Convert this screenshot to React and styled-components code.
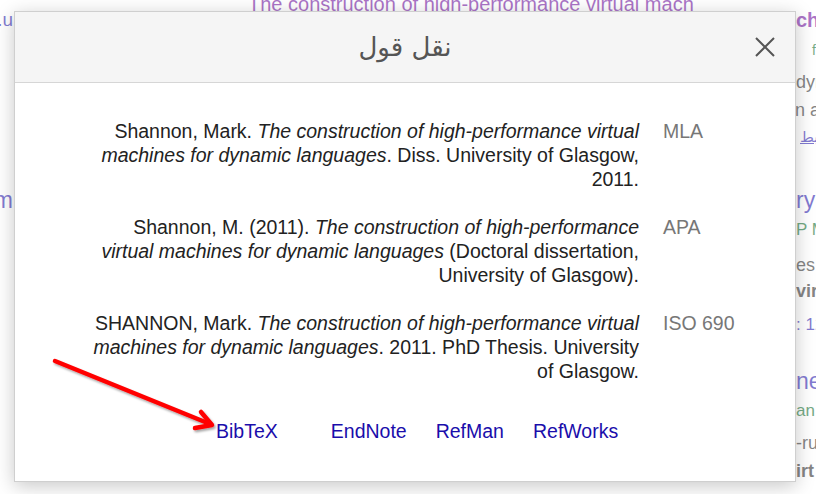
import styled, { createGlobalStyle } from "styled-components";

const GlobalStyle = createGlobalStyle`
  html, body {
    margin: 0;
    padding: 0;
    background: #fff;
  }
  body {
    font-family: "Liberation Sans", Arial, "DejaVu Sans", sans-serif;
    overflow: hidden;
  }
`;

const tones = {
  visited: "#660099",
  link: "#1a0dab",
  green: "#006621",
  text: "#222",
};

// page behind the modal, only the edges show
const bgLines = [
  { y: 4, x: 248, size: 20, tone: "visited", text: "The construction of high-performance virtual mach" },
  { y: 20, x: 796, size: 20, tone: "visited", bold: true, text: "chines for dynamic languages" },
  { y: 50, x: 812, size: 14, tone: "green", text: "ft" },
  { y: 82, x: 796, size: 18, tone: "text", text: "dynamic languages" },
  { y: 110, x: 791, size: 18, tone: "text", text: "in a" },
  { y: 137, x: 800, size: 15, tone: "link", underline: true, text: "مرتبط" },
  { y: 200, x: 796, size: 23, tone: "link", text: "ry" },
  { y: 230, x: 796, size: 17, tone: "green", text: "P M" },
  { y: 265, x: 796, size: 18, tone: "text", text: "es" },
  { y: 291, x: 796, size: 18, tone: "text", bold: true, text: "virtual" },
  { y: 325, x: 796, size: 17, tone: "link", text: ": 12" },
  { y: 381, x: 796, size: 23, tone: "link", text: "ne" },
  { y: 411, x: 796, size: 17, tone: "green", text: "an" },
  { y: 443, x: 796, size: 18, tone: "text", text: "-ru" },
  { y: 471, x: 796, size: 18, tone: "text", bold: true, text: "irt" },
];

const sideLinks = [
  { y: 20, size: 19, text: "[PDF] theses.u" },
  { y: 200, size: 23, text: "[PDF] dl.acm" },
];

const citations = [
  {
    label: "MLA",
    before: "Shannon, Mark. ",
    title: "The construction of high-performance virtual machines for dynamic languages",
    after: ". Diss. University of Glasgow, 2011.",
  },
  {
    label: "APA",
    before: "Shannon, M. (2011). ",
    title: "The construction of high-performance virtual machines for dynamic languages",
    after: " (Doctoral dissertation, University of Glasgow).",
  },
  {
    label: "ISO 690",
    before: "SHANNON, Mark. ",
    title: "The construction of high-performance virtual machines for dynamic languages",
    after: ". 2011. PhD Thesis. University of Glasgow.",
  },
];

const exportLinks = ["BibTeX", "EndNote", "RefMan", "RefWorks"];

const Screen = styled.div`
  position: relative;
  width: 816px;
  height: 494px;
  overflow: hidden;
`;

const ResultsPage = styled.div`
  display: grid;
  grid-template-columns: 14px 1fr;
  height: 100%;
`;

const SideCol = styled.div`
  display: flex;
  flex-direction: column;
`;

const SideLink = styled.div`
  display: flex;
  justify-content: flex-end;
  height: 20px;
  line-height: 20px;
  margin-top: ${(p) => p.$mt}px;
  margin-right: 1px;
  white-space: nowrap;
  font-size: ${(p) => p.$size}px;
  color: ${tones.link};
`;

const MainCol = styled.div`
  display: flex;
  flex-direction: column;
`;

const BgLine = styled.div`
  height: 20px;
  line-height: 20px;
  margin-top: ${(p) => p.$mt}px;
  padding-left: ${(p) => p.$x - 14}px;
  white-space: nowrap;
  font-size: ${(p) => p.$size}px;
  font-weight: ${(p) => (p.$bold ? 700 : 400)};
  color: ${(p) => tones[p.$tone]};
  text-decoration: ${(p) => (p.$underline ? "underline" : "none")};
`;

const Veil = styled.div`
  position: absolute;
  inset: 0;
  background: rgba(255, 255, 255, 0.45);
`;

const Dialog = styled.div`
  position: absolute;
  left: 14px;
  top: 11px;
  width: 782px;
  height: 471px;
  box-sizing: border-box;
  background: #fff;
  border: 1px solid #cfcfcf;
  box-shadow: 0 4px 18px rgba(0, 0, 0, 0.22);
  display: flex;
  flex-direction: column;
`;

const Header = styled.div`
  height: 70px;
  background: #f5f5f5;
  border-bottom: 1px solid #d6d6d6;
  display: grid;
  grid-template-columns: 60px 1fr 60px;
  align-items: center;
`;

const Title = styled.h2`
  grid-column: 2;
  margin: 0;
  direction: rtl;
  text-align: center;
  font-family: "DejaVu Sans", "Noto Sans", sans-serif;
  font-weight: 400;
  font-size: 26px;
  line-height: 30px;
  color: #555;
`;

const CloseButton = styled.button`
  grid-column: 3;
  justify-self: center;
  width: 24px;
  height: 24px;
  padding: 0;
  border: 0;
  background: none;
  display: flex;
  align-items: center;
  justify-content: center;
`;

const Body = styled.div`
  padding-top: 24px;
  display: flex;
  flex-direction: column;
`;

const CiteRow = styled.div`
  display: grid;
  direction: rtl;
  grid-template-columns: 132px 556px;
  column-gap: 24px;
  padding: 12px 0;
  font-size: 19.5px;
  line-height: 24px;
`;

const Label = styled.div`
  direction: ltr;
  text-align: left;
  color: #777;
`;

const CiteText = styled.div`
  direction: ltr;
  text-align: right;
  color: #222;

  i {
    font-style: italic;
  }
`;

const LinksRow = styled.div`
  display: flex;
  margin-top: 24px;
  padding-left: 201px;
  gap: 29px;
  font-size: 19.5px;
  line-height: 24px;
`;

const ExportLink = styled.a`
  color: #1a0dab;
  text-decoration: none;
  margin-right: ${(p) => (p.$first ? 24 : 0)}px;
`;

const Annotation = styled.svg`
  position: absolute;
  left: 0;
  top: 0;
  pointer-events: none;
`;

function Background() {
  let bottom = 0;
  const main = bgLines.map((l, i) => {
    const mt = l.y - 10 - bottom;
    bottom = l.y + 10;
    return (
      <BgLine
        key={i}
        $mt={mt}
        $x={l.x}
        $size={l.size}
        $tone={l.tone}
        $bold={l.bold}
        $underline={l.underline}
      >
        {l.text}
      </BgLine>
    );
  });
  let sideBottom = 0;
  const side = sideLinks.map((s, i) => {
    const mt = s.y - 10 - sideBottom;
    sideBottom = s.y + 10;
    return (
      <SideLink key={i} $mt={mt} $size={s.size}>
        <span>{s.text}</span>
      </SideLink>
    );
  });
  return (
    <ResultsPage>
      <SideCol>{side}</SideCol>
      <MainCol>{main}</MainCol>
    </ResultsPage>
  );
}

export default function App() {
  return (
    <Screen>
      <GlobalStyle />
      <Background />
      <Veil />
      <Dialog>
        <Header>
          <Title>نقل قول</Title>
          <CloseButton aria-label="close">
            <svg width="22" height="22" viewBox="0 0 22 22">
              <path d="M2 2 L20 20 M20 2 L2 20" stroke="#555" strokeWidth="2" fill="none" />
            </svg>
          </CloseButton>
        </Header>
        <Body>
          {citations.map((c) => (
            <CiteRow key={c.label}>
              <Label>{c.label}</Label>
              <CiteText>
                {c.before}
                <i>{c.title}</i>
                {c.after}
              </CiteText>
            </CiteRow>
          ))}
          <LinksRow>
            {exportLinks.map((name, i) => (
              <ExportLink key={name} href="#" $first={i === 0}>
                {name}
              </ExportLink>
            ))}
          </LinksRow>
        </Body>
      </Dialog>
      <Annotation width="816" height="494" viewBox="0 0 816 494">
        <defs>
          <filter id="arrowShadow" x="-10%" y="-10%" width="130%" height="140%">
            <feDropShadow dx="1.5" dy="2" stdDeviation="1" floodColor="#000" floodOpacity="0.35" />
          </filter>
        </defs>
        <g filter="url(#arrowShadow)" stroke="#ff0000" strokeWidth="4.5" strokeLinecap="round" strokeLinejoin="round" fill="none">
          <line x1="55" y1="361" x2="210" y2="424" />
          <polyline points="201,412 212,425 195,428" />
        </g>
      </Annotation>
    </Screen>
  );
}
